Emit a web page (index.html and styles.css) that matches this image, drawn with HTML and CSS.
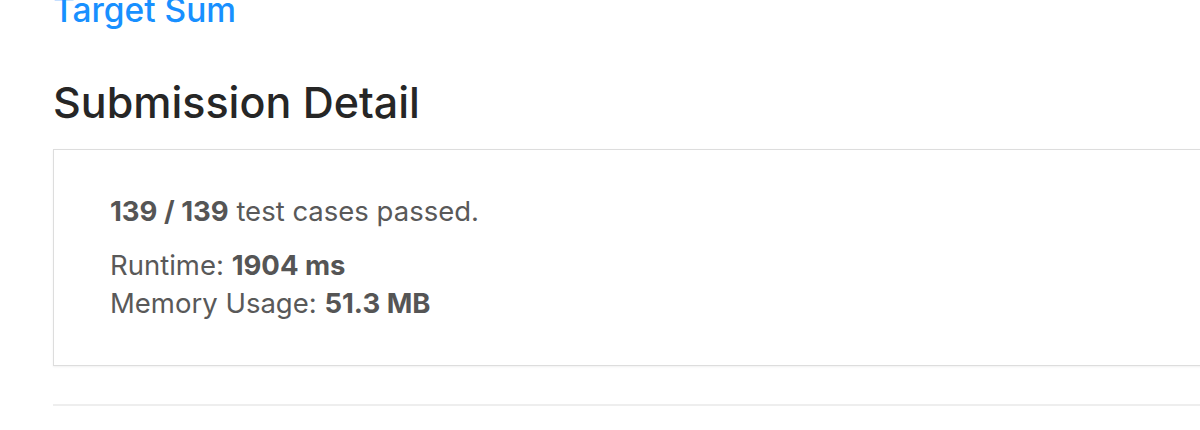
FILE: index.html
```html
<!DOCTYPE html>
<html lang="en">
<head>
  <meta charset="UTF-8" />
  <title>Submission Detail</title>
  <link rel="stylesheet" href="styles.css">
</head>
<body>
  <main class="page">
    <a class="problem-link" href="#">Target Sum</a>
    <h2 class="title">Submission Detail</h2>

    <div class="detail-card">
      <p class="passed"><b>139 / 139</b> test cases passed.</p>
      <p class="stat">Runtime: <b>1904 ms</b></p>
      <p class="stat">Memory Usage: <b>51.3 MB</b></p>
    </div>

    <hr class="divider">
  </main>
</body>
</html>
```

FILE: styles.css
```css
* {
  box-sizing: border-box;
  margin: 0;
  padding: 0;
}

body {
  font-family: Inter, "Liberation Sans", sans-serif;
  background: #fff;
  color: #595959;
  overflow: hidden;
}

.page {
  padding-left: 53px;
  margin-top: -10px;
}

.problem-link {
  display: block;
  font-size: 33.5px;
  font-weight: 500;
  line-height: 40px;
  color: #1890ff;
  text-decoration: none;
}

.title {
  margin-top: 44px;
  font-size: 43px;
  font-weight: 500;
  line-height: 56px;
  color: #262626;
}

.detail-card {
  margin-top: 19px;
  width: 1300px;
  height: 217px;
  padding: 42px 56px;
  border: 1px solid #ddd;
  box-shadow: 0 1px 2px rgba(0, 0, 0, 0.06);
  font-size: 27.5px;
}

.detail-card b {
  font-weight: 700;
  color: #555;
}

.passed {
  line-height: 38px;
  margin-bottom: 16px;
}

.stat {
  line-height: 38px;
}

.divider {
  margin-top: 38px;
  border: none;
  border-top: 2px solid #eee;
}
```
